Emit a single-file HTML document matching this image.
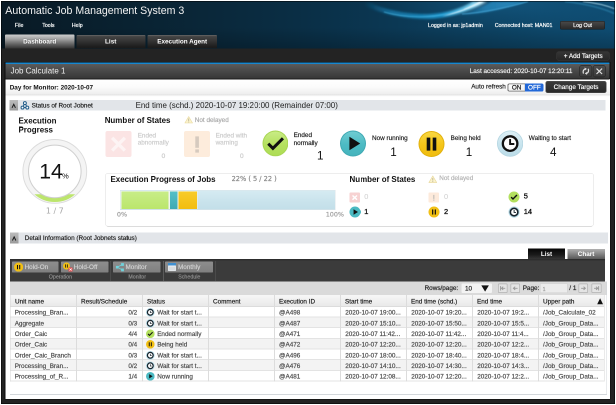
<!DOCTYPE html>
<html lang="en"><head><meta charset="utf-8"><title>Automatic Job Management System 3</title>
<style>
html,body{margin:0;padding:0;width:616px;height:405px;overflow:hidden;}
body{width:616px;height:405px;overflow:hidden;background:#fff;position:relative;
 font-family:"Liberation Sans",sans-serif;}
.b{position:absolute;box-sizing:border-box;display:block;}
.t{position:absolute;white-space:nowrap;overflow:visible;}
.s{-webkit-text-stroke:.36px;}
.v{font-family:"DejaVu Sans","Liberation Sans",sans-serif;}
</style></head><body>
<svg width="0" height="0" style="position:absolute"><defs>
<linearGradient id="gGreen" x1="0" y1="0" x2="0" y2="1"><stop offset="0" stop-color="#c9ec86"/><stop offset="0.55" stop-color="#b5e160"/><stop offset="1" stop-color="#aedd55"/></linearGradient>
<linearGradient id="gTeal" x1="0" y1="0" x2="0" y2="1"><stop offset="0" stop-color="#6fccd2"/><stop offset="0.55" stop-color="#4dbbc4"/><stop offset="1" stop-color="#45b4bd"/></linearGradient>
<linearGradient id="gYel" x1="0" y1="0" x2="0" y2="1"><stop offset="0" stop-color="#f9d740"/><stop offset="0.55" stop-color="#f5c518"/><stop offset="1" stop-color="#f0bd10"/></linearGradient>
<linearGradient id="gBlue" x1="0" y1="0" x2="0" y2="1"><stop offset="0" stop-color="#dceff5"/><stop offset="0.55" stop-color="#c8e4ee"/><stop offset="1" stop-color="#bcdce8"/></linearGradient>
</defs></svg>
<div id="root" style="position:absolute;left:0;top:0;width:1232px;height:810px;transform:scale(0.5);transform-origin:0 0;will-change:transform;overflow:hidden;">
<div class="b" style="left:2px;top:2px;width:1228px;height:806px;background:#000;"></div>
<div class="b" style="left:3.2px;top:3.2px;width:1225.6px;height:803.6px;background:#232323;"></div>
<div class="b" style="left:3.2px;top:3.2px;width:1225.6px;height:93.4px;background:linear-gradient(90deg,#091a25 0%,#09202e 15%,#0a2637 30%,#0a2f46 49%,#0c3b58 68%,#0e486b 88%,#0f4d73 100%);"></div>
<div class="b" style="left:3.2px;top:3.2px;width:1225.6px;height:93.4px;background:radial-gradient(ellipse 240px 52px at 1000px 0px,rgba(36,130,185,.26) 0%,rgba(30,120,175,.12) 55%,rgba(30,120,175,0) 100%);"></div>
<div class="b" style="left:3.2px;top:3.2px;width:1225.6px;height:93.4px;background:linear-gradient(180deg,rgba(0,0,0,0) 0%,rgba(0,0,0,0) 55%,rgba(0,0,0,.22) 100%);"></div>
<svg class="b" style="left:680px;top:3.2px;width:548.8px;height:93.4px" viewBox="0 0 274.40 46.70">
<defs>
<linearGradient id="sw1" gradientUnits="userSpaceOnUse" x1="24" y1="0" x2="150" y2="0"><stop offset="0" stop-color="#178ac4" stop-opacity="0"/><stop offset="0.22" stop-color="#1a92cc" stop-opacity=".6"/><stop offset="0.62" stop-color="#20a2dc" stop-opacity=".85"/><stop offset="0.85" stop-color="#7fd4f2" stop-opacity=".95"/><stop offset="1" stop-color="#eafaff" stop-opacity="1"/></linearGradient>
<linearGradient id="sw2" gradientUnits="userSpaceOnUse" x1="112" y1="0" x2="186" y2="0"><stop offset="0" stop-color="#1d6f9e" stop-opacity="0"/><stop offset="0.45" stop-color="#2a8fc6" stop-opacity=".7"/><stop offset="1" stop-color="#2f98cf" stop-opacity=".8"/></linearGradient>
<filter id="bl" x="-10%" y="-50%" width="120%" height="200%"><feGaussianBlur stdDeviation=".5"/></filter>
<filter id="bl2" x="-10%" y="-50%" width="120%" height="200%"><feGaussianBlur stdDeviation="1.1"/></filter>
</defs>
<g filter="url(#bl2)">
<path d="M18 1 C38 12 64 18 90 17.2 C112 16.2 131 9 147 0 L133 0 C121 7 106 12 88 12.6 C68 13 46 9 30 1 Z" fill="url(#sw1)"/>
<path d="M112 14.5 C140 13.5 164 7 186 0 L152 0 C140 6 128 11 112 14.5 Z" fill="url(#sw2)"/>
</g>
<g filter="url(#bl)">
<path d="M102 15 C118 12 132 6.5 144 0 L139.5 0 C128 6 116 11 102 15 Z" fill="#e6f8ff" opacity=".8"/>
<path d="M44 10.5 C70 18 100 16.5 124 7.5" fill="none" stroke="#4fc0ee" stroke-width=".7" opacity=".75"/>
<path d="M122 12.5 C146 11 168 5.5 188 0" fill="none" stroke="#4aaee0" stroke-width="1.0" opacity=".8"/>
<path d="M243 0 C256 1.4 266 3.8 274.4 7.2" fill="none" stroke="#b6e4f4" stroke-width="1" opacity=".8"/>
<path d="M225 0 C248 2.5 262 6.5 274.4 12" fill="none" stroke="#3a9bc8" stroke-width="1.8" opacity=".4"/>
</g>
</svg>
<div class="t" style="left:10.6px;top:6.8px;height:28px;line-height:28px;font-size:21.2px;color:#f2f2f2;">Automatic Job Management System 3</div>
<div class="t s" style="left:29.8px;top:40px;height:20px;line-height:20px;font-size:10.6px;color:#fff;">File</div>
<div class="t s" style="left:84.4px;top:40px;height:20px;line-height:20px;font-size:10.6px;color:#fff;">Tools</div>
<div class="t s" style="left:143.6px;top:40px;height:20px;line-height:20px;font-size:10.6px;color:#fff;">Help</div>
<div class="t s" style="left:856px;top:40px;height:20px;line-height:20px;font-size:10.6px;color:#fff;">Logged in as: jp1admin</div>
<div class="t s" style="left:989.4px;top:40px;height:20px;line-height:20px;font-size:10.6px;color:#fff;">Connected host: MAN01</div>
<div class="b" style="left:1121.4px;top:43.2px;width:87.8px;height:14.6px;background:linear-gradient(180deg,#4a4a4a,#2a2a2a);border-radius:2.4px;box-shadow:0 0 0 1px #1a1a1a;"></div>
<div class="t s" style="left:965.2px;width:400px;text-align:center;top:40.4px;height:20px;line-height:20px;font-size:10.6px;color:#fff;">Log Out</div>
<div class="b" style="left:10px;top:69.4px;width:138.8px;height:27.2px;background:linear-gradient(180deg,#cfcfcf 0%,#a6a6a6 30%,#6a6a6a 65%,#333 100%);border-radius:2px 2px 0 0;"></div>
<div class="t" style="left:-120.6px;width:400px;text-align:center;top:73.2px;height:20px;line-height:20px;font-size:12.72px;color:#fff;font-weight:bold;text-shadow:0 0 2px rgba(0,0,0,.5);">Dashboard</div>
<div class="b" style="left:152.8px;top:70px;width:138.2px;height:24.8px;background:linear-gradient(180deg,#6a6a6a 0%,#444 12%,#383838 40%,#1b1b1b 100%);border-radius:2px 2px 0 0;"></div>
<div class="t" style="left:21.4px;width:400px;text-align:center;top:73.2px;height:20px;line-height:20px;font-size:12.72px;color:#fff;font-weight:bold;">List</div>
<div class="b" style="left:295.2px;top:70px;width:138.8px;height:24.8px;background:linear-gradient(180deg,#6a6a6a 0%,#444 12%,#383838 40%,#1b1b1b 100%);border-radius:2px 2px 0 0;"></div>
<div class="t" style="left:164.4px;width:400px;text-align:center;top:73.2px;height:20px;line-height:20px;font-size:12.72px;color:#fff;font-weight:bold;">Execution Agent</div>
<div class="b" style="left:3.2px;top:96.6px;width:1225.6px;height:28.2px;background:#232323;"></div>
<div class="b" style="left:1114px;top:103.6px;width:104px;height:16.8px;background:linear-gradient(180deg,#353535,#272727);border-radius:3.2px;box-shadow:0 0 0 1px #3e3e3e;"></div>
<div class="t s" style="left:966.4px;width:400px;text-align:center;top:102px;height:20px;line-height:20px;font-size:12.72px;color:#fff;">+ Add Targets</div>
<div class="b" style="left:9.4px;top:124.4px;width:1212px;height:674.6px;background:#0c0c0c;"></div>
<div class="b" style="left:10.6px;top:158px;width:1209.4px;height:639.6px;background:#fff;"></div>
<div class="b" style="left:10.6px;top:125.2px;width:1208px;height:3px;background:#1787cf;"></div>
<div class="b" style="left:10.6px;top:128px;width:1208px;height:29.4px;background:linear-gradient(180deg,#5c5c5c 0%,#4a4a4a 45%,#373737 100%);"></div>
<div class="t" style="left:21.2px;top:130px;height:24px;line-height:24px;font-size:15.9px;color:#f0f0f0;">Job Calculate 1</div>
<div class="t s" style="left:939.4px;top:132px;height:20px;line-height:20px;font-size:12.72px;color:#f0f0f0;">Last accessed: 2020-10-07 12:20:11</div>
<div class="b" style="left:1159.8px;top:132.4px;width:23.4px;height:20.6px;background:linear-gradient(180deg,#4d4d4d,#3b3b3b);border-radius:3.2px;box-shadow:0 0 0 1.4px #272727;"></div>
<svg class="b" style="left:1159.8px;top:132.4px;width:23.4px;height:20.6px" viewBox="0 0 11.70 10.30"><g fill="none" stroke="#dedede" stroke-width="1.25"><path d="M3.5 7.6 C2.6 5.6 3.3 3.6 5.2 2.9"/><path d="M8.2 2.8 C9.1 4.8 8.4 6.8 6.5 7.5"/></g><path d="M4.6 1.5 L6.9 2.9 L4.9 4.5 Z" fill="#dedede"/><path d="M7.1 8.9 L4.8 7.5 L6.8 5.9 Z" fill="#dedede"/></svg>
<div class="b" style="left:1187.4px;top:132.4px;width:23px;height:20.6px;background:linear-gradient(180deg,#4d4d4d,#3b3b3b);border-radius:3.2px;box-shadow:0 0 0 1.4px #272727;"></div>
<svg class="b" style="left:1187.4px;top:132.4px;width:23px;height:20.6px" viewBox="0 0 11.50 10.30"><path d="M3.0 2.6 L8.6 8.0 M8.6 2.6 L3.0 8.0" stroke="#e0e0e0" stroke-width="1.2" fill="none"/></svg>
<div class="b" style="left:10.6px;top:157.4px;width:1208.6px;height:1.6px;background:#1c1c1c;"></div>
<div class="b" style="left:10.6px;top:159px;width:1209.4px;height:30.2px;background:linear-gradient(180deg,#fff 0%,#fbfbfb 50%,#eeeeee 100%);"></div>
<div class="b" style="left:10.6px;top:189px;width:1209.4px;height:4px;background:linear-gradient(180deg,#dcdcdc 0%,#f6f6f6 60%,#fff 100%);"></div>
<div class="t" style="left:19.4px;top:164.6px;height:20px;line-height:20px;font-size:12.72px;color:#111;font-weight:bold;">Day for Monitor: 2020-10-07</div>
<div class="t s" style="left:942.4px;top:163.2px;height:20px;line-height:20px;font-size:12.72px;color:#222;">Auto refresh</div>
<div class="b" style="left:1015.2px;top:167px;width:35.6px;height:16px;background:linear-gradient(180deg,#fff,#eee);box-shadow:inset 0 0 0 1.4px #6c6c6c;border-radius:3.6px 0 0 3.6px;"></div>
<div class="t s" style="left:833.2px;width:400px;text-align:center;top:165.2px;height:20px;line-height:20px;font-size:12.72px;color:#111;">ON</div>
<div class="b" style="left:1050.4px;top:167px;width:36.8px;height:16px;background:#2268d8;border-radius:0 3.6px 3.6px 0;"></div>
<div class="t s" style="left:868.8px;width:400px;text-align:center;top:165.2px;height:20px;line-height:20px;font-size:12.72px;color:#fff;">OFF</div>
<div class="b" style="left:1092.4px;top:162.8px;width:119.2px;height:22.2px;background:linear-gradient(180deg,#3b3b3b,#282828);border-radius:3px;box-shadow:0 0 0 0.8px #222;"></div>
<div class="t s" style="left:952px;width:400px;text-align:center;top:164.2px;height:20px;line-height:20px;font-size:12.72px;color:#fff;">Change Targets</div>
<div class="b" style="left:18.6px;top:199.6px;width:1192.6px;height:21.8px;background:#e2e5e9;"></div>
<div class="b" style="left:18.6px;top:199.6px;width:17px;height:21.8px;background:linear-gradient(180deg,#bdbdbd,#9a9a9a);"></div>
<svg class="b" style="left:18.6px;top:199.6px;width:17px;height:21.8px" viewBox="0 0 8.50 10.90"><path d="M2.55 7.85 L4.25 4.25 L5.95 7.85" fill="none" stroke="#1a1a1a" stroke-width="1.0"/></svg>
<svg class="b" style="left:41.2px;top:201.6px;width:17.6px;height:17.6px" viewBox="0 0 8.80 8.80"><g fill="#fff" stroke="#235d8a" stroke-width="1.0"><path d="M4.4 2.2 L2.0 6.5 L6.8 6.5 Z" fill="none"/><circle cx="4.4" cy="2.1" r="1.45"/><circle cx="2.0" cy="6.6" r="1.45"/><circle cx="6.8" cy="6.6" r="1.45"/></g></svg>
<div class="t s" style="left:63.2px;top:200.8px;height:20px;line-height:20px;font-size:12.72px;color:#222;">Status of Root Jobnet</div>
<div class="t" style="left:271.2px;top:198.8px;height:24px;line-height:24px;font-size:15.9px;color:#222;">End time (schd.) 2020-10-07 19:20:00 (Remainder 07:00)</div>
<div class="t" style="left:37px;top:230.2px;height:24px;line-height:24px;font-size:15.9px;color:#111;font-weight:bold;">Execution</div>
<div class="t" style="left:37px;top:248px;height:24px;line-height:24px;font-size:15.9px;color:#111;font-weight:bold;">Progress</div>
<svg class="b" style="left:40px;top:274px;width:140px;height:140px" viewBox="0 0 70.00 70.00">
<defs><clipPath id="cpFill"><rect x="0" y="57.2" width="70" height="20"/></clipPath></defs>
<circle cx="34.8" cy="34.4" r="31.9" fill="#f4f4f4" stroke="#dcdcdc" stroke-width=".9"/>
<circle cx="34.8" cy="34.4" r="28.5" fill="none" stroke="#bce56c" stroke-width="4.2" clip-path="url(#cpFill)"/>
<circle cx="34.8" cy="34.4" r="26.3" fill="#fff" stroke="#cfcfcf" stroke-width="1"/>
</svg>
<div class="t" style="left:78.4px;top:317.2px;height:52px;line-height:52px;font-size:42.4px;color:#111;">14</div>
<div class="t" style="left:124px;top:341.6px;height:20px;line-height:20px;font-size:15.2px;color:#111;">%</div>
<div class="t" style="left:-90.4px;width:400px;text-align:center;top:412.4px;height:20px;line-height:20px;font-size:15.9px;color:#a6a6a6;font-family:DejaVu Sans,sans-serif;">1 / 7</div>
<div class="t" style="left:209.4px;top:228.6px;height:24px;line-height:24px;font-size:15.9px;color:#111;font-weight:bold;">Number of States</div>
<svg class="b" style="left:368.8px;top:232.4px;width:16.8px;height:15px;opacity:0.5" viewBox="0 0 16 14"><path d="M8 0.8 L15.3 13.2 L0.7 13.2 Z" fill="#f8e89a" stroke="#d2b23c" stroke-width="1.1" stroke-linejoin="round"/><rect x="7.2" y="4.6" width="1.6" height="4.8" fill="#7a6a30"/><rect x="7.2" y="10.4" width="1.6" height="1.6" fill="#7a6a30"/></svg>
<div class="t s" style="left:389.6px;top:230px;height:20px;line-height:20px;font-size:12.72px;color:#aaa;">Not delayed</div>
<div class="b" style="left:211.4px;top:261.8px;width:52px;height:51.8px;background:#fbe4e4;border-radius:4px;"></div>
<svg class="b" style="left:211.4px;top:261.8px;width:52px;height:51.8px" viewBox="0 0 26.00 25.90"><path d="M6.6 6.8 L19.4 19.6 M19.4 6.8 L6.6 19.6" stroke="#fff" stroke-width="3.3" fill="none" opacity=".6"/></svg>
<div class="t s" style="left:275.4px;top:260.6px;height:20px;line-height:20px;font-size:12.72px;color:#ccc;">Ended</div>
<div class="t s" style="left:275.4px;top:275.2px;height:20px;line-height:20px;font-size:12.72px;color:#ccc;">abnormally</div>
<div class="t s" style="left:322.8px;top:302px;height:20px;line-height:20px;font-size:12.8px;color:#cdcdcd;font-family:DejaVu Sans,sans-serif;">0</div>
<div class="b" style="left:367.8px;top:261.8px;width:52px;height:51.8px;background:#fdecdc;border-radius:4px;"></div>
<svg class="b" style="left:367.8px;top:261.8px;width:52px;height:51.8px" viewBox="0 0 26.00 25.90"><rect x="11.3" y="5.4" width="3.6" height="11.4" fill="#9f9b97" opacity=".42"/><rect x="11.3" y="18.4" width="3.6" height="3.2" fill="#9f9b97" opacity=".42"/></svg>
<div class="t s" style="left:431.2px;top:260.6px;height:20px;line-height:20px;font-size:12.72px;color:#ccc;">Ended with</div>
<div class="t s" style="left:431.2px;top:275.2px;height:20px;line-height:20px;font-size:12.72px;color:#ccc;">warning</div>
<div class="t s" style="left:479.6px;top:302px;height:20px;line-height:20px;font-size:12.8px;color:#cdcdcd;font-family:DejaVu Sans,sans-serif;">0</div>
<svg class="b" style="left:524.6px;top:261.4px;width:51.6px;height:51.6px" viewBox="-13 -13 26 26"><circle r="13" fill="#a8d652"/><circle r="12" fill="url(#gGreen)"/><path d="M-7.2 0.3 L-2.5 5.0 L7.6 -5.1" fill="none" stroke="#111" stroke-width="3.0"/></svg>
<div class="t s" style="left:587.2px;top:260.4px;height:20px;line-height:20px;font-size:12.72px;color:#222;">Ended</div>
<div class="t s" style="left:587.2px;top:275.8px;height:20px;line-height:20px;font-size:12.72px;color:#222;">normally</div>
<div class="t" style="left:634px;top:296.8px;height:28px;line-height:28px;font-size:23.32px;color:#111;">1</div>
<svg class="b" style="left:679.8px;top:261.2px;width:52px;height:52px" viewBox="-13 -13 26 26"><circle r="13" fill="#3fa9b3"/><circle r="12" fill="url(#gTeal)"/><path d="M-3.6 -6.8 L-3.6 6.8 L7.2 0 Z" fill="#111"/></svg>
<div class="t s" style="left:744px;top:265.6px;height:20px;line-height:20px;font-size:12.72px;color:#222;">Now running</div>
<div class="t" style="left:780.6px;top:289.8px;height:28px;line-height:28px;font-size:23.32px;color:#111;">1</div>
<svg class="b" style="left:836.6px;top:261.6px;width:52px;height:52px" viewBox="-13 -13 26 26"><circle r="13" fill="#e2b10c"/><circle r="12" fill="url(#gYel)"/><rect x="-4.8" y="-6.4" width="3.6" height="13" fill="#111"/><rect x="1.2" y="-6.4" width="3.6" height="13" fill="#111"/></svg>
<div class="t s" style="left:901.2px;top:265.6px;height:20px;line-height:20px;font-size:12.72px;color:#222;">Being held</div>
<div class="t" style="left:931.4px;top:289.8px;height:28px;line-height:28px;font-size:23.32px;color:#111;">1</div>
<svg class="b" style="left:993.6px;top:261.4px;width:52.4px;height:52.4px" viewBox="-13 -13 26 26"><circle r="13" fill="#b4d6e2"/><circle r="12.2" fill="url(#gBlue)"/><circle r="7.2" fill="#fdfdfd" stroke="#111" stroke-width="2.3"/><path d="M0 -4.6 L0 0.4 L4.2 0.4" fill="none" stroke="#111" stroke-width="1.9"/></svg>
<div class="t s" style="left:1057.6px;top:265.6px;height:20px;line-height:20px;font-size:12.72px;color:#222;">Waiting to start</div>
<div class="t" style="left:1100px;top:289.8px;height:28px;line-height:28px;font-size:23.32px;color:#111;">4</div>
<div class="b" style="left:210.4px;top:346px;width:977.2px;height:106.8px;background:#fff;border:1.6px solid #dcdcdc;border-radius:6px;"></div>
<div class="t" style="left:221px;top:346.6px;height:24px;line-height:24px;font-size:15.9px;color:#111;font-weight:bold;">Execution Progress of Jobs</div>
<div class="t s" style="left:463.2px;top:348px;height:20px;line-height:20px;font-size:13.2px;color:#8a8a8a;font-family:DejaVu Sans,sans-serif;">22% ( 5 / 22 )</div>
<div class="b" style="left:239.6px;top:380px;width:431.6px;height:40px;background:linear-gradient(180deg,#d6ebf2 0%,#c9e3ec 60%,#c3dfe9 100%);border:1.6px solid #dde6ea;"></div>
<div class="b" style="left:241.2px;top:381.6px;width:97.6px;height:36.8px;background:#eef5f2;"></div>
<div class="b" style="left:243px;top:382.6px;width:94.4px;height:35px;background:linear-gradient(180deg,#c8ed88,#bbe66c);"></div>
<div class="b" style="left:338.8px;top:381.6px;width:56.4px;height:36.8px;background:#f3f3ea;"></div>
<div class="b" style="left:339.8px;top:382.6px;width:15.6px;height:35px;background:linear-gradient(180deg,#55c0c8,#3faab3);"></div>
<div class="b" style="left:357.4px;top:382.6px;width:36.6px;height:35px;background:linear-gradient(180deg,#f8cc2a,#f2bd0e);"></div>
<div class="t s" style="left:233.8px;top:419.2px;height:20px;line-height:20px;font-size:13px;color:#a0a0a0;font-family:DejaVu Sans,sans-serif;">0%</div>
<div class="t s" style="left:651.4px;top:419.2px;height:20px;line-height:20px;font-size:12.8px;color:#a0a0a0;font-family:DejaVu Sans,sans-serif;">100%</div>
<div class="t" style="left:699px;top:346.6px;height:24px;line-height:24px;font-size:15.9px;color:#111;font-weight:bold;">Number of States</div>
<svg class="b" style="left:856.6px;top:350.6px;width:17.2px;height:15px;opacity:0.5" viewBox="0 0 16 14"><path d="M8 0.8 L15.3 13.2 L0.7 13.2 Z" fill="#f8e89a" stroke="#d2b23c" stroke-width="1.1" stroke-linejoin="round"/><rect x="7.2" y="4.6" width="1.6" height="4.8" fill="#7a6a30"/><rect x="7.2" y="10.4" width="1.6" height="1.6" fill="#7a6a30"/></svg>
<div class="t s" style="left:878.6px;top:346.4px;height:20px;line-height:20px;font-size:12.72px;color:#b4b4b4;">Not delayed</div>
<div class="b" style="left:699px;top:384.6px;width:21px;height:20.4px;background:#f7d2d2;border-radius:2px;"></div>
<svg class="b" style="left:699px;top:384.6px;width:21px;height:20.4px" viewBox="0 0 10.50 10.20"><path d="M3 3 L7.5 7.2 M7.5 3 L3 7.2" stroke="#fff" stroke-width="1.4" fill="none"/></svg>
<div class="t" style="left:728.4px;top:382.8px;height:20px;line-height:20px;font-size:14.84px;color:#cfcfcf;">0</div>
<div class="b" style="left:856.8px;top:384.6px;width:21.2px;height:20.4px;background:#fdeadb;border-radius:2px;"></div>
<svg class="b" style="left:856.8px;top:384.6px;width:21.2px;height:20.4px" viewBox="0 0 10.60 10.20"><rect x="4.7" y="2.4" width="1.2" height="4" fill="#c5c0ba"/><rect x="4.7" y="7" width="1.2" height="1.2" fill="#c5c0ba"/></svg>
<div class="t" style="left:888px;top:382.8px;height:20px;line-height:20px;font-size:14.84px;color:#cfcfcf;">0</div>
<svg class="b" style="left:1017px;top:383.2px;width:22px;height:22px" viewBox="-13 -13 26 26"><circle r="13" fill="#b3e05e"/><path d="M-6.8 0.4 L-2.4 4.8 L7.0 -4.8" fill="none" stroke="#111" stroke-width="3.3"/></svg>
<div class="t" style="left:1047.6px;top:382px;height:20px;line-height:20px;font-size:14.84px;color:#111;-webkit-text-stroke:0.6px;">5</div>
<svg class="b" style="left:698.6px;top:413.2px;width:22px;height:22px" viewBox="-13 -13 26 26"><circle r="13" fill="#4bb9c2"/><path d="M-3.4 -6.6 L-3.4 6.6 L7.0 0 Z" fill="#111"/></svg>
<div class="t" style="left:728.4px;top:412.6px;height:20px;line-height:20px;font-size:14.84px;color:#111;-webkit-text-stroke:0.6px;">1</div>
<svg class="b" style="left:857px;top:413.2px;width:22px;height:22px" viewBox="-13 -13 26 26"><circle r="13" fill="#f2c014"/><rect x="-4.6" y="-6" width="2.9" height="12" fill="#111"/><rect x="1.7" y="-6" width="2.9" height="12" fill="#111"/></svg>
<div class="t" style="left:888px;top:412.6px;height:20px;line-height:20px;font-size:14.84px;color:#111;-webkit-text-stroke:0.6px;">2</div>
<svg class="b" style="left:1016.8px;top:413.4px;width:22.4px;height:22.4px" viewBox="-13 -13 26 26"><circle r="13" fill="#b5dbe8"/><circle r="8.7" fill="#fff" stroke="#18232b" stroke-width="3.7"/><path d="M0 -4.8 L0 0.8 L4.4 0.8" fill="none" stroke="#18232b" stroke-width="2.1"/></svg>
<div class="t" style="left:1047.6px;top:413px;height:20px;line-height:20px;font-size:14.84px;color:#111;-webkit-text-stroke:0.6px;">14</div>
<div class="b" style="left:20px;top:464.6px;width:1195.6px;height:22.4px;background:#e2e5e9;"></div>
<div class="b" style="left:20px;top:464.6px;width:16.6px;height:22.4px;background:linear-gradient(180deg,#bdbdbd,#9a9a9a);"></div>
<svg class="b" style="left:20px;top:464.6px;width:16.6px;height:22.4px" viewBox="0 0 8.30 11.20"><path d="M2.45 8.00 L4.15 4.40 L5.85 8.00" fill="none" stroke="#1a1a1a" stroke-width="1.0"/></svg>
<div class="t s" style="left:49.6px;top:465.6px;height:20px;line-height:20px;font-size:12.72px;color:#222;">Detail Information (Root Jobnets status)</div>
<div class="b" style="left:1055.6px;top:497.2px;width:74.8px;height:22px;background:linear-gradient(180deg,#050505 0%,#1a1a1a 55%,#383838 100%);"></div>
<div class="t" style="left:893px;width:400px;text-align:center;top:498px;height:20px;line-height:20px;font-size:12.72px;color:#fff;font-weight:bold;">List</div>
<div class="b" style="left:1134.6px;top:497.2px;width:75.4px;height:22px;background:linear-gradient(180deg,#b5b5b5 0%,#8a8a8a 45%,#555 100%);"></div>
<div class="t" style="left:972.2px;width:400px;text-align:center;top:498px;height:20px;line-height:20px;font-size:12.72px;color:#fff;font-weight:bold;">Chart</div>
<div class="b" style="left:19.2px;top:518px;width:1190.8px;height:44.6px;background:linear-gradient(180deg,#2a2a2a 0%,#3b3b3b 10%,#3b3b3b 100%);"></div>
<div class="b" style="left:23.6px;top:523.4px;width:93.8px;height:21.4px;background:linear-gradient(180deg,#8e8e8e,#808080);border-radius:1.6px;"></div>
<div class="t s" style="left:49.2px;top:524.4px;height:20px;line-height:20px;font-size:12.72px;color:#d2d2d2;">Hold-On</div>
<div class="b" style="left:121.6px;top:523.4px;width:95px;height:21.4px;background:linear-gradient(180deg,#8e8e8e,#808080);border-radius:1.6px;"></div>
<div class="t s" style="left:147.6px;top:524.4px;height:20px;line-height:20px;font-size:12.72px;color:#d2d2d2;">Hold-Off</div>
<div class="b" style="left:225.6px;top:523.4px;width:95.8px;height:21.4px;background:linear-gradient(180deg,#8e8e8e,#808080);border-radius:1.6px;"></div>
<div class="t s" style="left:251px;top:524.4px;height:20px;line-height:20px;font-size:12.72px;color:#d2d2d2;">Monitor</div>
<div class="b" style="left:330px;top:523.4px;width:96.4px;height:21.4px;background:linear-gradient(180deg,#8e8e8e,#808080);border-radius:1.6px;"></div>
<div class="t s" style="left:356px;top:524.4px;height:20px;line-height:20px;font-size:12.72px;color:#d2d2d2;">Monthly</div>
<svg class="b" style="left:27.6px;top:524.8px;width:18.4px;height:18.4px" viewBox="-13 -13 26 26"><circle r="13" fill="#f2c014"/><rect x="-4.6" y="-6" width="2.9" height="12" fill="#111"/><rect x="1.7" y="-6" width="2.9" height="12" fill="#111"/></svg>
<svg class="b" style="left:125.8px;top:524.6px;width:14px;height:14px" viewBox="-13 -13 26 26"><circle r="13" fill="#f2c014"/><rect x="-4.6" y="-6" width="2.9" height="12" fill="#111"/><rect x="1.7" y="-6" width="2.9" height="12" fill="#111"/></svg>
<div class="b" style="left:136.8px;top:534.8px;width:8.4px;height:8px;background:#e8484a;"></div>
<svg class="b" style="left:136.8px;top:534.8px;width:8.4px;height:8px" viewBox="0 0 4.20 4.00"><path d="M1 1 L3.2 3 M3.2 1 L1 3" stroke="#fff" stroke-width=".7"/></svg>
<svg class="b" style="left:230.8px;top:524.8px;width:19.2px;height:18.8px" viewBox="0 0 9.60 9.40"><g stroke="#6fd3dc" stroke-width=".8" fill="none"><path d="M2 4.7 L6.6 2 M2 4.7 L6.6 7.4"/></g><g fill="#6fd3dc"><rect x=".4" y="3.4" width="2.6" height="2.6"/><rect x="5.6" y=".6" width="2.8" height="2.8"/><rect x="5.6" y="6" width="2.8" height="2.8"/></g></svg>
<div class="b" style="left:335.6px;top:526.4px;width:16.8px;height:15.6px;background:#f4f4f4;border:1px solid #cfd6dc;"></div>
<div class="b" style="left:335.6px;top:526.4px;width:16.8px;height:4.4px;background:#3f8fd0;"></div>
<div class="b" style="left:338px;top:532.8px;width:12px;height:7.2px;background:#d9dde0;"></div>
<div class="b" style="left:221px;top:522px;width:1.2px;height:40px;background:#5a5a5a;"></div>
<div class="b" style="left:326.4px;top:522px;width:1.2px;height:40px;background:#5a5a5a;"></div>
<div class="b" style="left:430.6px;top:522px;width:1.2px;height:40px;background:#5a5a5a;"></div>
<div class="t s" style="left:-79.2px;width:400px;text-align:center;top:543.4px;height:20px;line-height:20px;font-size:10.6px;color:#8e8e8e;">Operation</div>
<div class="t s" style="left:74.4px;width:400px;text-align:center;top:543.4px;height:20px;line-height:20px;font-size:10.6px;color:#8e8e8e;">Monitor</div>
<div class="t s" style="left:178.6px;width:400px;text-align:center;top:543.4px;height:20px;line-height:20px;font-size:10.6px;color:#8e8e8e;">Schedule</div>
<div class="b" style="left:19.2px;top:562.6px;width:1195.2px;height:27.8px;background:#dadada;"></div>
<div class="t s" style="left:849.2px;top:566.4px;height:20px;line-height:20px;font-size:12.72px;color:#222;">Rows/page:</div>
<div class="b" style="left:922.8px;top:567.2px;width:61.6px;height:19.2px;background:#f3f3f3;border-radius:2px;"></div>
<div class="t s" style="left:930px;top:566.6px;height:20px;line-height:20px;font-size:12.72px;color:#222;">10</div>
<svg class="b" style="left:962.4px;top:570px;width:16.4px;height:14px" viewBox="0 0 8.20 7.00"><path d="M.3 .4 L7.9 .4 L4.1 6.6 Z" fill="#111"/></svg>
<div class="b" style="left:995.6px;top:567.2px;width:19.2px;height:19.2px;background:#e4e4e4;box-shadow:inset 0 0 0 1.4px #b0b0b0;border-radius:2px;"></div>
<svg class="b" style="left:995.6px;top:567.2px;width:19.2px;height:19.2px" viewBox="0 0 9.60 9.60"><path d="M2.60 2.6 L2.60 7 M7.20 4.8 L3.60 4.8 M5.20 3.2 L3.50 4.8 L5.20 6.4" stroke="#9a9a9a" stroke-width=".95" fill="none"/></svg>
<div class="b" style="left:1020.8px;top:567.2px;width:19.6px;height:19.2px;background:#e4e4e4;box-shadow:inset 0 0 0 1.4px #b0b0b0;border-radius:2px;"></div>
<svg class="b" style="left:1020.8px;top:567.2px;width:19.6px;height:19.2px" viewBox="0 0 9.80 9.60"><path d="M7.10 4.8 L2.90 4.8 M4.70 3.2 L2.90 4.8 L4.70 6.4" stroke="#9a9a9a" stroke-width=".95" fill="none"/></svg>
<div class="t s" style="left:1045.4px;top:566.4px;height:20px;line-height:20px;font-size:12.72px;color:#222;">Page:</div>
<div class="b" style="left:1079.6px;top:567.2px;width:55.2px;height:19.2px;background:#ececec;border:1.2px solid #d0d0d0;"></div>
<div class="t s" style="left:1085.2px;top:568px;height:20px;line-height:20px;font-size:10.6px;color:#999;">1</div>
<div class="t s" style="left:1138.6px;top:566.4px;height:20px;line-height:20px;font-size:12.72px;color:#222;">/ 1</div>
<div class="b" style="left:1157px;top:567.2px;width:19.4px;height:19.2px;background:#e4e4e4;box-shadow:inset 0 0 0 1.4px #b0b0b0;border-radius:2px;"></div>
<svg class="b" style="left:1157px;top:567.2px;width:19.4px;height:19.2px" viewBox="0 0 9.70 9.60"><path d="M2.65 4.8 L6.85 4.8 M5.05 3.2 L6.85 4.8 L5.05 6.4" stroke="#9a9a9a" stroke-width=".95" fill="none"/></svg>
<div class="b" style="left:1183.2px;top:567.2px;width:19.8px;height:19.2px;background:#e4e4e4;box-shadow:inset 0 0 0 1.4px #b0b0b0;border-radius:2px;"></div>
<svg class="b" style="left:1183.2px;top:567.2px;width:19.8px;height:19.2px" viewBox="0 0 9.90 9.60"><path d="M7.15 2.6 L7.15 7 M2.55 4.8 L6.15 4.8 M4.55 3.2 L6.25 4.8 L4.55 6.4" stroke="#9a9a9a" stroke-width=".95" fill="none"/></svg>
<div class="b" style="left:19px;top:590.4px;width:1195.4px;height:198.8px;background:#fff;"></div>
<div class="b" style="left:19px;top:562.6px;width:1.4px;height:226.6px;background:#d3d7db;"></div>
<div class="b" style="left:1213px;top:562.6px;width:1.4px;height:226.6px;background:#d3d7db;"></div>
<div class="b" style="left:19px;top:787.8px;width:1195.4px;height:1.4px;background:#d3d7db;"></div>
<div class="b" style="left:20.8px;top:590.4px;width:1188px;height:23.2px;background:linear-gradient(180deg,#f7f7f7,#e9e9e9);border-bottom:1.2px solid #cfcfcf;"></div>
<div class="t s" style="left:30px;top:593.4px;height:20px;line-height:20px;font-size:12.72px;color:#222;">Unit name</div>
<div class="t s" style="left:162px;top:593.4px;height:20px;line-height:20px;font-size:12.72px;color:#222;">Result/Schedule</div>
<div class="t s" style="left:294px;top:593.4px;height:20px;line-height:20px;font-size:12.72px;color:#222;">Status</div>
<div class="t s" style="left:426px;top:593.4px;height:20px;line-height:20px;font-size:12.72px;color:#222;">Comment</div>
<div class="t s" style="left:558px;top:593.4px;height:20px;line-height:20px;font-size:12.72px;color:#222;">Execution ID</div>
<div class="t s" style="left:690px;top:593.4px;height:20px;line-height:20px;font-size:12.72px;color:#222;">Start time</div>
<div class="t s" style="left:822px;top:593.4px;height:20px;line-height:20px;font-size:12.72px;color:#222;">End time (schd.)</div>
<div class="t s" style="left:954px;top:593.4px;height:20px;line-height:20px;font-size:12.72px;color:#222;">End time</div>
<div class="t s" style="left:1086px;top:593.4px;height:20px;line-height:20px;font-size:12.72px;color:#222;">Upper path</div>
<svg class="b" style="left:1193.6px;top:595.6px;width:12.4px;height:13.2px" viewBox="0 0 6.20 6.60"><path d="M3.1 .3 L6.0 6.2 L.2 6.2 Z" fill="#111"/></svg>
<div class="b" style="left:20.8px;top:613.6px;width:1188px;height:21.32px;background:#fff;border-bottom:2px solid #e3e3e3;"></div>
<div class="t s" style="left:29.4px;top:615.26px;height:20px;line-height:20px;font-size:12.72px;color:#4a4a4a;">Processing_Bran...</div>
<div class="t s" style="right:957.6px;top:615.26px;height:20px;line-height:20px;font-size:12.72px;color:#4a4a4a;">0/2</div>
<svg class="b" style="left:292px;top:616.26px;width:17.2px;height:17.2px" viewBox="-13 -13 26 26"><circle r="13" fill="#b5dbe8"/><circle r="8.7" fill="#fff" stroke="#18232b" stroke-width="3.7"/><path d="M0 -4.8 L0 0.8 L4.4 0.8" fill="none" stroke="#18232b" stroke-width="2.1"/></svg>
<div class="t s" style="left:314.4px;top:615.26px;height:20px;line-height:20px;font-size:12.72px;color:#4a4a4a;">Wait for start t...</div>
<div class="t s" style="left:558px;top:615.26px;height:20px;line-height:20px;font-size:12.72px;color:#4a4a4a;">@A498</div>
<div class="t s" style="left:690.4px;top:615.26px;height:20px;line-height:20px;font-size:12.72px;color:#4a4a4a;">2020-10-07 19:00...</div>
<div class="t s" style="left:822.4px;top:615.26px;height:20px;line-height:20px;font-size:12.72px;color:#4a4a4a;">2020-10-07 19:20...</div>
<div class="t s" style="left:954.4px;top:615.26px;height:20px;line-height:20px;font-size:12.72px;color:#4a4a4a;">2020-10-07 19:2...</div>
<div class="t s" style="left:1086px;top:615.26px;height:20px;line-height:20px;font-size:12.72px;color:#4a4a4a;">/Job_Calculate_02</div>
<div class="b" style="left:20.8px;top:634.92px;width:1188px;height:21.32px;background:#f3f3f3;border-bottom:2px solid #e3e3e3;"></div>
<div class="t s" style="left:29.4px;top:636.58px;height:20px;line-height:20px;font-size:12.72px;color:#4a4a4a;">Aggregate</div>
<div class="t s" style="right:957.6px;top:636.58px;height:20px;line-height:20px;font-size:12.72px;color:#4a4a4a;">0/3</div>
<svg class="b" style="left:292px;top:637.58px;width:17.2px;height:17.2px" viewBox="-13 -13 26 26"><circle r="13" fill="#b5dbe8"/><circle r="8.7" fill="#fff" stroke="#18232b" stroke-width="3.7"/><path d="M0 -4.8 L0 0.8 L4.4 0.8" fill="none" stroke="#18232b" stroke-width="2.1"/></svg>
<div class="t s" style="left:314.4px;top:636.58px;height:20px;line-height:20px;font-size:12.72px;color:#4a4a4a;">Wait for start t...</div>
<div class="t s" style="left:558px;top:636.58px;height:20px;line-height:20px;font-size:12.72px;color:#4a4a4a;">@A487</div>
<div class="t s" style="left:690.4px;top:636.58px;height:20px;line-height:20px;font-size:12.72px;color:#4a4a4a;">2020-10-07 15:10...</div>
<div class="t s" style="left:822.4px;top:636.58px;height:20px;line-height:20px;font-size:12.72px;color:#4a4a4a;">2020-10-07 15:50...</div>
<div class="t s" style="left:954.4px;top:636.58px;height:20px;line-height:20px;font-size:12.72px;color:#4a4a4a;">2020-10-07 15:5...</div>
<div class="t s" style="left:1086px;top:636.58px;height:20px;line-height:20px;font-size:12.72px;color:#4a4a4a;">/Job_Group_Data...</div>
<div class="b" style="left:20.8px;top:656.24px;width:1188px;height:21.32px;background:#fff;border-bottom:2px solid #e3e3e3;"></div>
<div class="t s" style="left:29.4px;top:657.9px;height:20px;line-height:20px;font-size:12.72px;color:#4a4a4a;">Order_Caic</div>
<div class="t s" style="right:957.6px;top:657.9px;height:20px;line-height:20px;font-size:12.72px;color:#4a4a4a;">4/4</div>
<svg class="b" style="left:292px;top:658.9px;width:17.2px;height:17.2px" viewBox="-13 -13 26 26"><circle r="13" fill="#b3e05e"/><path d="M-6.8 0.4 L-2.4 4.8 L7.0 -4.8" fill="none" stroke="#111" stroke-width="3.3"/></svg>
<div class="t s" style="left:314.4px;top:657.9px;height:20px;line-height:20px;font-size:12.72px;color:#4a4a4a;">Ended normally</div>
<div class="t s" style="left:558px;top:657.9px;height:20px;line-height:20px;font-size:12.72px;color:#4a4a4a;">@A471</div>
<div class="t s" style="left:690.4px;top:657.9px;height:20px;line-height:20px;font-size:12.72px;color:#4a4a4a;">2020-10-07 11:42...</div>
<div class="t s" style="left:822.4px;top:657.9px;height:20px;line-height:20px;font-size:12.72px;color:#4a4a4a;">2020-10-07 11:42...</div>
<div class="t s" style="left:954.4px;top:657.9px;height:20px;line-height:20px;font-size:12.72px;color:#4a4a4a;">2020-10-07 11:4...</div>
<div class="t s" style="left:1086px;top:657.9px;height:20px;line-height:20px;font-size:12.72px;color:#4a4a4a;">/Job_Group_Data...</div>
<div class="b" style="left:20.8px;top:677.56px;width:1188px;height:21.32px;background:#f3f3f3;border-bottom:2px solid #e3e3e3;"></div>
<div class="t s" style="left:29.4px;top:679.22px;height:20px;line-height:20px;font-size:12.72px;color:#4a4a4a;">Order_Caic</div>
<div class="t s" style="right:957.6px;top:679.22px;height:20px;line-height:20px;font-size:12.72px;color:#4a4a4a;">0/4</div>
<svg class="b" style="left:292px;top:680.22px;width:17.2px;height:17.2px" viewBox="-13 -13 26 26"><circle r="13" fill="#f2c014"/><rect x="-4.6" y="-6" width="2.9" height="12" fill="#111"/><rect x="1.7" y="-6" width="2.9" height="12" fill="#111"/></svg>
<div class="t s" style="left:314.4px;top:679.22px;height:20px;line-height:20px;font-size:12.72px;color:#4a4a4a;">Being held</div>
<div class="t s" style="left:558px;top:679.22px;height:20px;line-height:20px;font-size:12.72px;color:#4a4a4a;">@A472</div>
<div class="t s" style="left:690.4px;top:679.22px;height:20px;line-height:20px;font-size:12.72px;color:#4a4a4a;">2020-10-07 12:20...</div>
<div class="t s" style="left:822.4px;top:679.22px;height:20px;line-height:20px;font-size:12.72px;color:#4a4a4a;">2020-10-07 12:20...</div>
<div class="t s" style="left:954.4px;top:679.22px;height:20px;line-height:20px;font-size:12.72px;color:#4a4a4a;">2020-10-07 12:2...</div>
<div class="t s" style="left:1086px;top:679.22px;height:20px;line-height:20px;font-size:12.72px;color:#4a4a4a;">/Job_Group_Data...</div>
<div class="b" style="left:20.8px;top:698.88px;width:1188px;height:21.32px;background:#fff;border-bottom:2px solid #e3e3e3;"></div>
<div class="t s" style="left:29.4px;top:700.54px;height:20px;line-height:20px;font-size:12.72px;color:#4a4a4a;">Order_Caic_Branch</div>
<div class="t s" style="right:957.6px;top:700.54px;height:20px;line-height:20px;font-size:12.72px;color:#4a4a4a;">0/3</div>
<svg class="b" style="left:292px;top:701.54px;width:17.2px;height:17.2px" viewBox="-13 -13 26 26"><circle r="13" fill="#b5dbe8"/><circle r="8.7" fill="#fff" stroke="#18232b" stroke-width="3.7"/><path d="M0 -4.8 L0 0.8 L4.4 0.8" fill="none" stroke="#18232b" stroke-width="2.1"/></svg>
<div class="t s" style="left:314.4px;top:700.54px;height:20px;line-height:20px;font-size:12.72px;color:#4a4a4a;">Wait for start t...</div>
<div class="t s" style="left:558px;top:700.54px;height:20px;line-height:20px;font-size:12.72px;color:#4a4a4a;">@A496</div>
<div class="t s" style="left:690.4px;top:700.54px;height:20px;line-height:20px;font-size:12.72px;color:#4a4a4a;">2020-10-07 18:00...</div>
<div class="t s" style="left:822.4px;top:700.54px;height:20px;line-height:20px;font-size:12.72px;color:#4a4a4a;">2020-10-07 18:40...</div>
<div class="t s" style="left:954.4px;top:700.54px;height:20px;line-height:20px;font-size:12.72px;color:#4a4a4a;">2020-10-07 18:4...</div>
<div class="t s" style="left:1086px;top:700.54px;height:20px;line-height:20px;font-size:12.72px;color:#4a4a4a;">/Job_Group_Data...</div>
<div class="b" style="left:20.8px;top:720.2px;width:1188px;height:21.32px;background:#f3f3f3;border-bottom:2px solid #e3e3e3;"></div>
<div class="t s" style="left:29.4px;top:721.86px;height:20px;line-height:20px;font-size:12.72px;color:#4a4a4a;">Processing_Bran...</div>
<div class="t s" style="right:957.6px;top:721.86px;height:20px;line-height:20px;font-size:12.72px;color:#4a4a4a;">0/2</div>
<svg class="b" style="left:292px;top:722.86px;width:17.2px;height:17.2px" viewBox="-13 -13 26 26"><circle r="13" fill="#b5dbe8"/><circle r="8.7" fill="#fff" stroke="#18232b" stroke-width="3.7"/><path d="M0 -4.8 L0 0.8 L4.4 0.8" fill="none" stroke="#18232b" stroke-width="2.1"/></svg>
<div class="t s" style="left:314.4px;top:721.86px;height:20px;line-height:20px;font-size:12.72px;color:#4a4a4a;">Wait for start t...</div>
<div class="t s" style="left:558px;top:721.86px;height:20px;line-height:20px;font-size:12.72px;color:#4a4a4a;">@A476</div>
<div class="t s" style="left:690.4px;top:721.86px;height:20px;line-height:20px;font-size:12.72px;color:#4a4a4a;">2020-10-07 14:10...</div>
<div class="t s" style="left:822.4px;top:721.86px;height:20px;line-height:20px;font-size:12.72px;color:#4a4a4a;">2020-10-07 14:30...</div>
<div class="t s" style="left:954.4px;top:721.86px;height:20px;line-height:20px;font-size:12.72px;color:#4a4a4a;">2020-10-07 14:3...</div>
<div class="t s" style="left:1086px;top:721.86px;height:20px;line-height:20px;font-size:12.72px;color:#4a4a4a;">/Job_Group_Data...</div>
<div class="b" style="left:20.8px;top:741.52px;width:1188px;height:21.32px;background:#fff;border-bottom:2px solid #e3e3e3;"></div>
<div class="t s" style="left:29.4px;top:743.18px;height:20px;line-height:20px;font-size:12.72px;color:#4a4a4a;">Processing_of_R...</div>
<div class="t s" style="right:957.6px;top:743.18px;height:20px;line-height:20px;font-size:12.72px;color:#4a4a4a;">1/4</div>
<svg class="b" style="left:292px;top:744.18px;width:17.2px;height:17.2px" viewBox="-13 -13 26 26"><circle r="13" fill="#4bb9c2"/><path d="M-3.4 -6.6 L-3.4 6.6 L7.0 0 Z" fill="#111"/></svg>
<div class="t s" style="left:314.4px;top:743.18px;height:20px;line-height:20px;font-size:12.72px;color:#4a4a4a;">Now running</div>
<div class="t s" style="left:558px;top:743.18px;height:20px;line-height:20px;font-size:12.72px;color:#4a4a4a;">@A481</div>
<div class="t s" style="left:690.4px;top:743.18px;height:20px;line-height:20px;font-size:12.72px;color:#4a4a4a;">2020-10-07 12:08...</div>
<div class="t s" style="left:822.4px;top:743.18px;height:20px;line-height:20px;font-size:12.72px;color:#4a4a4a;">2020-10-07 12:20...</div>
<div class="t s" style="left:954.4px;top:743.18px;height:20px;line-height:20px;font-size:12.72px;color:#4a4a4a;">2020-10-07 12:2...</div>
<div class="t s" style="left:1086px;top:743.18px;height:20px;line-height:20px;font-size:12.72px;color:#4a4a4a;">/Job_Group_Data...</div>
<div class="b" style="left:152px;top:590.4px;width:1.6px;height:172.44px;background:#dcdcdc;"></div>
<div class="b" style="left:284px;top:590.4px;width:1.6px;height:172.44px;background:#dcdcdc;"></div>
<div class="b" style="left:416px;top:590.4px;width:1.6px;height:172.44px;background:#dcdcdc;"></div>
<div class="b" style="left:548px;top:590.4px;width:1.6px;height:172.44px;background:#dcdcdc;"></div>
<div class="b" style="left:680px;top:590.4px;width:1.6px;height:172.44px;background:#dcdcdc;"></div>
<div class="b" style="left:812px;top:590.4px;width:1.6px;height:172.44px;background:#dcdcdc;"></div>
<div class="b" style="left:944px;top:590.4px;width:1.6px;height:172.44px;background:#dcdcdc;"></div>
<div class="b" style="left:1076px;top:590.4px;width:1.6px;height:172.44px;background:#dcdcdc;"></div>
<div class="b" style="left:1208.2px;top:590.4px;width:1.2px;height:172.44px;background:#d6d6d6;"></div>
<div class="b" style="left:20.2px;top:590.4px;width:1.2px;height:172.44px;background:#d6d6d6;"></div>
</div></body></html>
